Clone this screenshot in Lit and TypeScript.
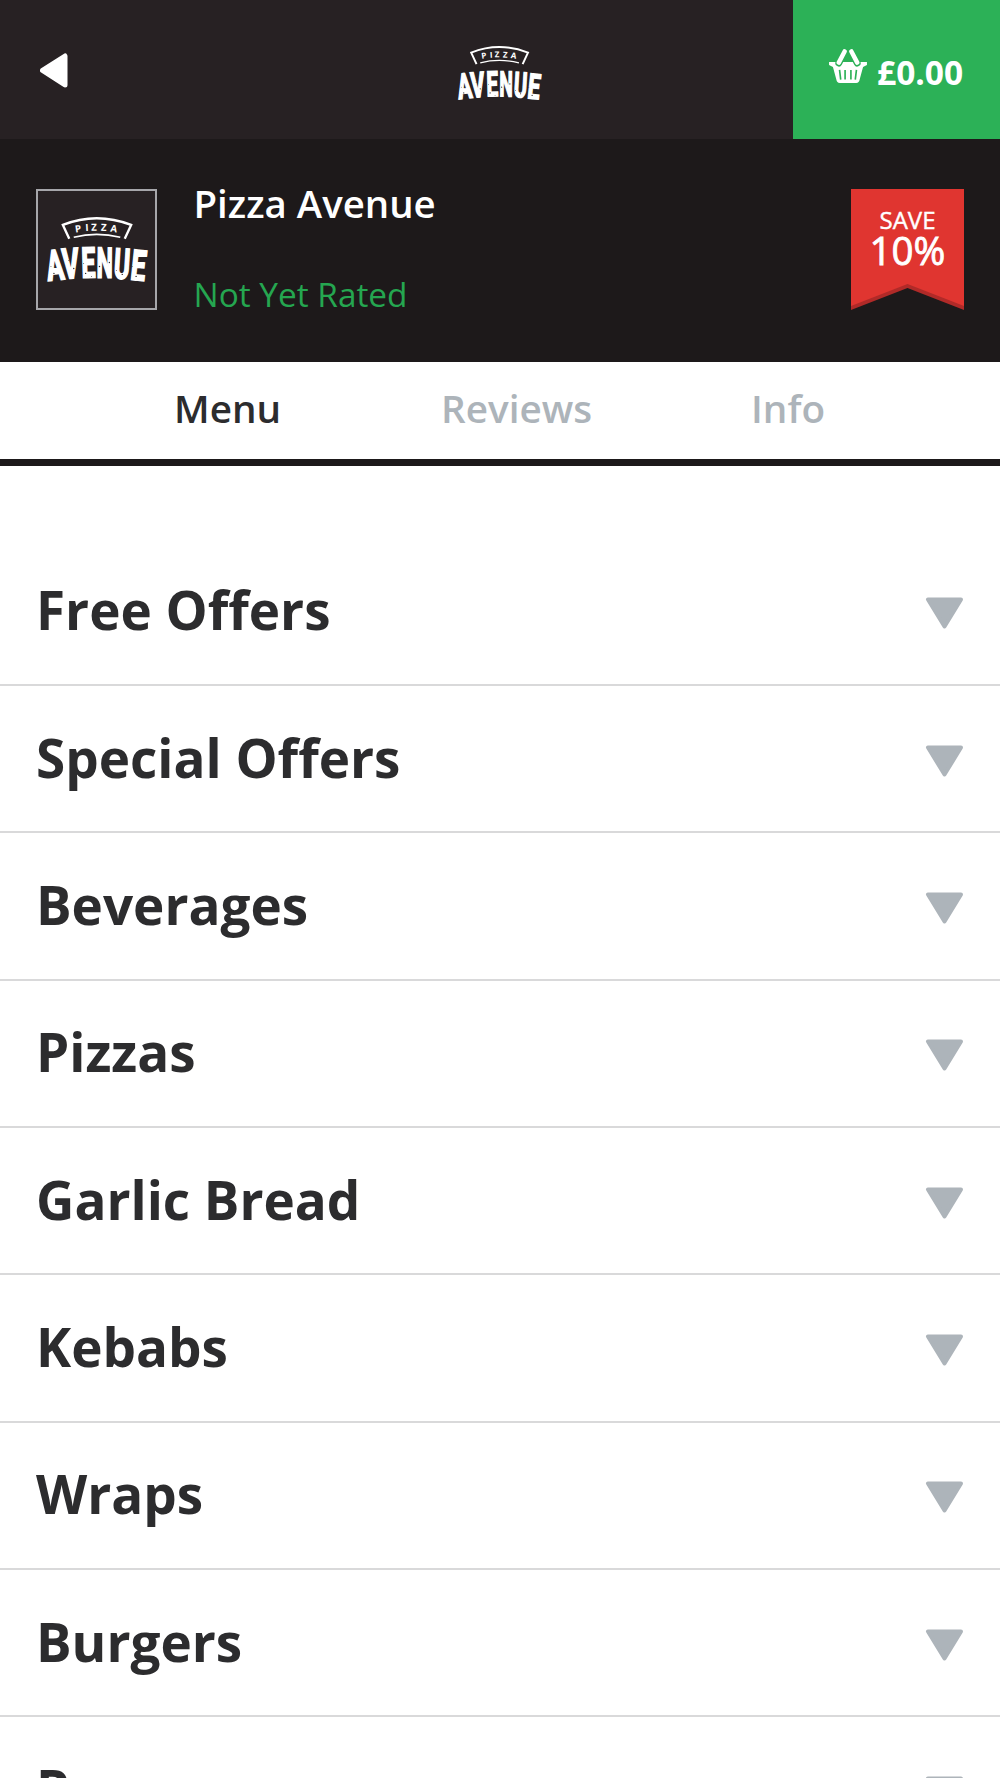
import { LitElement, html, css, svg } from "lit";
import { customElement, property } from "lit/decorators.js";

@customElement("brand-mark")
class BrandMark extends LitElement {
  static styles = css`
    :host { display: block; }
    svg { display: block; width: 100%; height: auto; overflow: visible; }
    text { fill: #fff; font-weight: 700; }
    .small { font-family: "Open Sans", sans-serif; font-size: 9.8px; }
    .big { font-family: "Roboto", sans-serif; font-size: 38px; stroke: #fff; stroke-width: 1.8; }
  `;
  render() {
    const letters: [string, number, number, number, number][] = [
      ["A", 1, 64.5, -6, 0.68], ["V", 16.5, 62.5, -4, 0.68], ["E", 35, 61, -1.5, 0.66],
      ["N", 50, 61, 0.5, 0.61], ["U", 67, 61.7, 3.5, 0.64], ["E", 83.5, 63, 6, 0.7],
    ];
    const specks = [[7, 57], [4, 50], [11, 61], [22, 44], [27, 52], [37, 47], [39, 57], [45, 60], [53, 50], [58, 56], [63, 46], [70, 54], [76, 58], [86, 50], [90, 60], [95, 42]];
    return html`<svg viewBox="0 0 102 67" role="img">
      <path d="M22.5 22 L16 8 Q50 -5.5 85 8 L78.5 22" fill="none" stroke="#fff" stroke-width="2.4"/>
      <path d="M27 20.5 Q50 14.5 74 20.5" fill="none" stroke="#fff" stroke-width="1.7"/>
      ${[["P", 28.8, 15.6, -8], ["I", 38.9, 14.2, -3], ["Z", 44.6, 13.8, -1], ["Z", 54.4, 14, 3], ["A", 63.7, 14.6, 9]].map(([c, x, y, r]) =>
        svg`<text class="small" transform="translate(${x} ${y}) rotate(${r})">${c}</text>`)}
      ${letters.map(([c, x, y, r, s]) =>
        svg`<text class="big" transform="translate(${x} ${y}) rotate(${r}) scale(${s} 1.11)">${c}</text>`)}
      ${specks.map(([x, y], i) => svg`<circle cx=${x} cy=${y} r=${i % 2 ? 0.5 : 0.7} fill="#272123"/>`)}
    </svg>`;
  }
}

@customElement("menu-row")
class MenuRow extends LitElement {
  @property() label = "";
  static styles = css`
    :host { display: flex; box-sizing: border-box; height: 147.36px; padding: 0 36px; align-items: center; justify-content: space-between; border-bottom: 2px solid #d9d9da; }
    .label { font: 700 53px/72px "Open Sans", sans-serif; color: #2c2c2e; font-variant-ligatures: none; white-space: nowrap; margin-top: -2px; }
    svg { display: block; width: 39px; height: 32px; margin-top: 4px; }
  `;
  render() {
    return html`<span class="label">${this.label}</span>
      <svg viewBox="0 0 39 32"><path d="M3 2.5H36L19.5 29.5Z" fill="#adb4ba" stroke="#adb4ba" stroke-width="4" stroke-linejoin="round"/></svg>`;
  }
}

@customElement("app-root")
class AppRoot extends LitElement {
  static styles = css`
    :host { display: block; height: 1778px; overflow: hidden; background: #fff; font-family: "Open Sans", sans-serif; }
    .bar { display: grid; grid-template-columns: 207px 1fr 207px; height: 139.4px; background: #272123; align-items: stretch; }
    .back { width: 28px; height: 35px; margin: 53px 0 0 40px; }
    .mark { width: 84px; margin: 46px auto 0; }
    .basket { display: flex; align-items: flex-start; gap: 10px; background: #2cb157; color: #fff; padding-left: 36px; }
    .basket svg { width: 38px; height: 34px; margin-top: 49px; flex: none; }
    .total { font-size: 33.5px; font-weight: 700; line-height: 46px; margin-top: 49px; }
    .shop { display: flex; height: 222.6px; box-sizing: border-box; padding: 49.2px 36px 0; background: #1d191a; }
    .avatar { box-sizing: border-box; width: 121px; height: 121px; border: 2px solid #a6a6aa; background: #272123; padding: 26px 7px 0 9px; }
    .info { flex: 1; padding-left: 36.5px; }
    .name { color: #fff; font-size: 38.4px; font-weight: 600; line-height: 50px; margin-top: -11px; }
    .rating { color: #25a650; font-size: 33.4px; line-height: 46px; margin-top: 43px; }
    .save { display: grid; width: 113px; height: 121px; text-align: center; color: #fff; }
    .save > * { grid-area: 1 / 1; }
    .words { padding-top: 16px; }
    .s1 { font-size: 24px; line-height: 30px; -webkit-text-stroke: 0.4px #fff; }
    .s2 { font-size: 38.5px; line-height: 32px; margin-top: -1px; -webkit-text-stroke: 0.8px #fff; }
    .tabs { display: flex; box-sizing: border-box; height: 104px; border-bottom: 7px solid #1d191a; padding-left: 174px; font-size: 38.7px; font-weight: 600; line-height: 93px; color: #adb4ba; }
    .tab { flex: none; }
    .on { color: #2c2c2e; width: 267px; }
    .mid { width: 310px; }
    .list { padding-top: 72.5px; }
  `;
  render() {
    const rows = ["Free Offers", "Special Offers", "Beverages", "Pizzas", "Garlic Bread", "Kebabs", "Wraps", "Burgers", "Parmos"];
    return html`
      <div class="bar">
        <svg class="back" viewBox="0 0 28 35"><path d="M2.5 17.3L25 3V32Z" fill="#fff" stroke="#fff" stroke-width="5" stroke-linejoin="round"/></svg>
        <brand-mark class="mark"></brand-mark>
        <div class="basket">
          <svg viewBox="0 0 39 35">
            <path d="M0 13.5H39V16.5L35 18.5L31.5 31.5Q31 35 28 35H11Q8 35 7.5 31.5L4 18.5L0 16.5Z" fill="#fff"/>
            <path d="M10 14.5L16 3M29 14.5L23 3" stroke="#2cb157" stroke-width="7" stroke-linecap="round"/>
            <path d="M15.5 13.5H23.5L26 21H13Z" fill="#fff"/>
            <path d="M10 14L16 2.5M29 14L23 2.5" stroke="#fff" stroke-width="4.6" stroke-linecap="round"/>
            <path d="M10.8 21.5L12 31.5M16.5 21.5V31.5M22.5 21.5V31.5M28.2 21.5L27 31.5" stroke="#2cb157" stroke-width="1.7"/>
          </svg>
          <span class="total">£0.00</span>
        </div>
      </div>
      <div class="shop">
        <div class="avatar"><brand-mark></brand-mark></div>
        <div class="info"><div class="name">Pizza Avenue</div><div class="rating">Not Yet Rated</div></div>
        <div class="save">
          <svg width="113" height="121" viewBox="0 0 113 121"><path d="M0 0H113V121L56.5 99L0 121Z" fill="#b02a28"/><path d="M0 0H113V117L56.5 95L0 117Z" fill="#e03530"/></svg>
          <div class="words"><div class="s1">SAVE</div><div class="s2">10%</div></div>
        </div>
      </div>
      <div class="tabs"><span class="tab on">Menu</span><span class="tab mid">Reviews</span><span class="tab">Info</span></div>
      <div class="list">${rows.map((r) => html`<menu-row .label=${r}></menu-row>`)}</div>
    `;
  }
}
